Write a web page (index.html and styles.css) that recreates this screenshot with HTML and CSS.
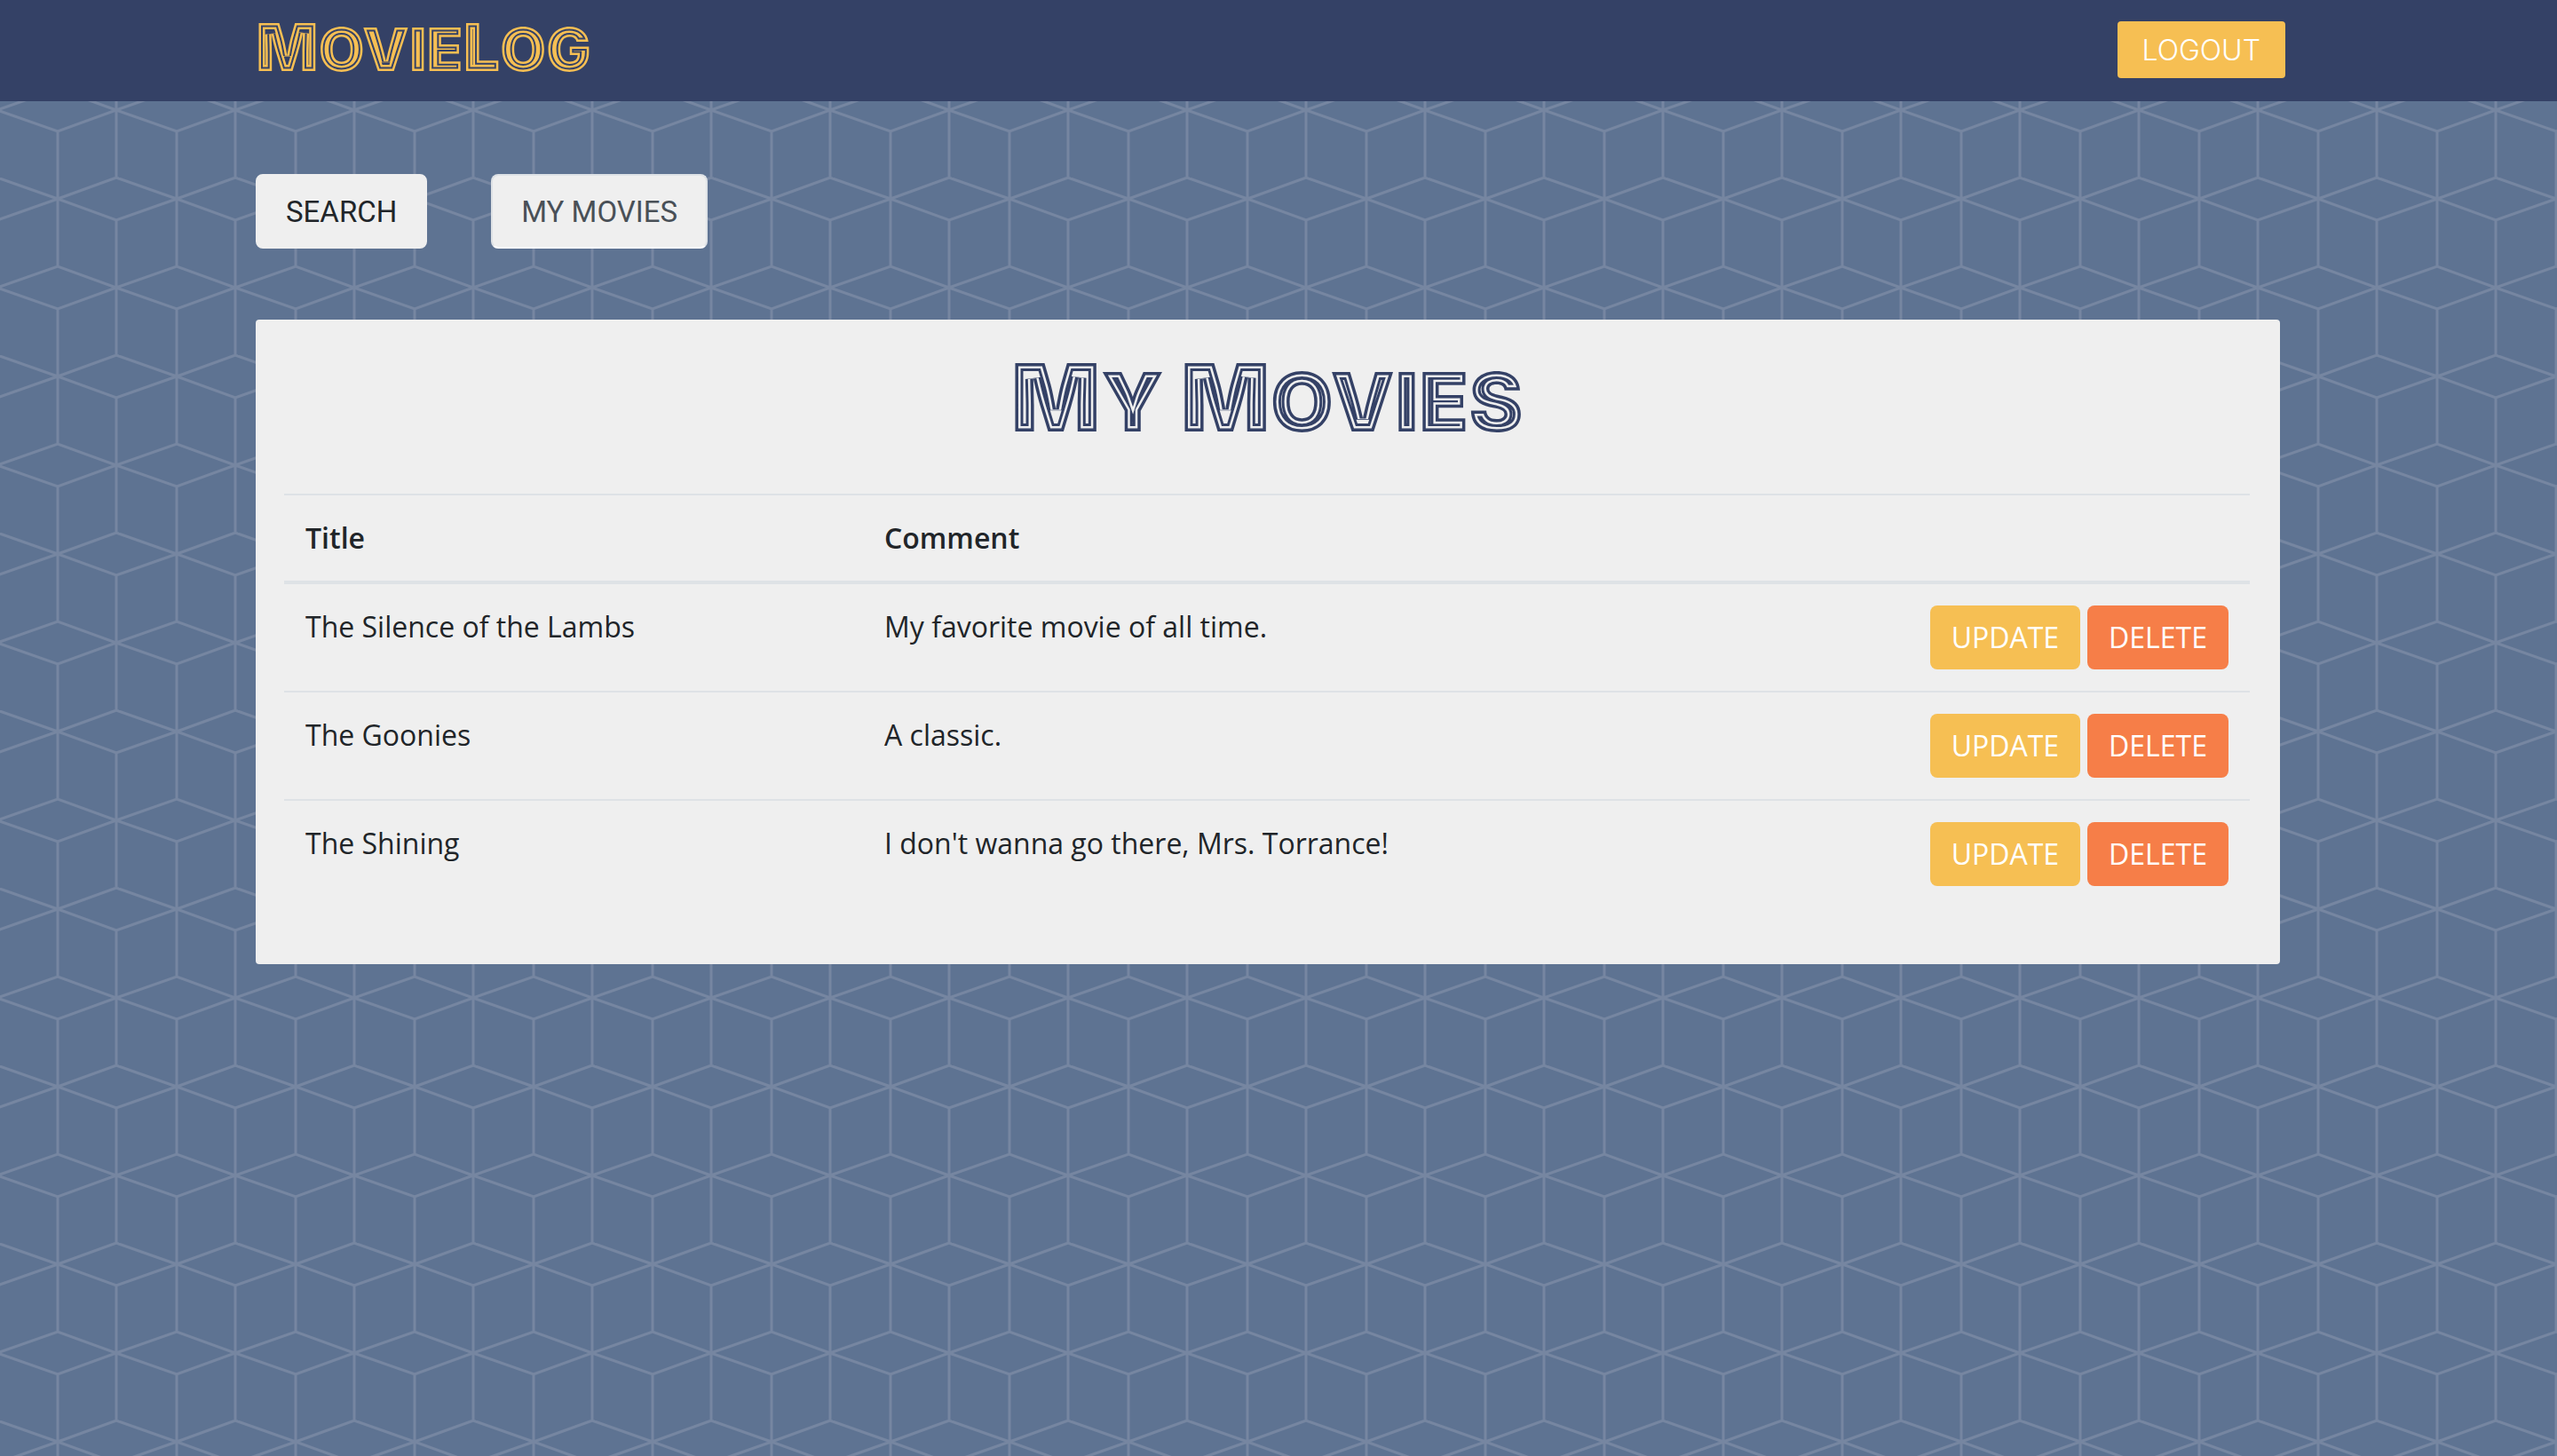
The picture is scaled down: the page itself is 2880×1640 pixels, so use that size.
FILE: index.html
```html
<!DOCTYPE html>
<html lang="en">
<head>
  <meta charset="utf-8">
  <meta name="viewport" content="width=device-width, initial-scale=1">
  <title>MovieLog</title>
  <link rel="stylesheet" href="styles.css">
</head>
<body>
  <header class="topbar">
    <a class="brand" href="#" aria-label="MovieLog">
      <svg class="neon neon-brand" width="400" height="64">
        <defs>
          <text id="brand-text" x="0" y="56"><tspan class="cap">M</tspan>ovie<tspan class="cap">L</tspan>og</text>
          <clipPath id="brand-clip"><use href="#brand-text"/></clipPath>
        </defs>
        <g clip-path="url(#brand-clip)">
          <use class="band-inner" href="#brand-text"/>
          <use class="band-gap" href="#brand-text"/>
          <use class="band-outer" href="#brand-text"/>
        </g>
      </svg>
    </a>
    <button class="logout" type="button">LOGOUT</button>
  </header>

  <main class="page">
    <nav class="tabs">
      <button class="tab" type="button">SEARCH</button>
      <button class="tab tab-active" type="button">MY MOVIES</button>
    </nav>

    <section class="panel">
      <h1 class="title">
        <svg class="neon neon-title" width="600" height="100" role="img" aria-label="My Movies">
          <defs>
            <text id="title-text" x="300" y="86" text-anchor="middle"><tspan class="cap">M</tspan>y <tspan class="cap">M</tspan>ovies</text>
            <clipPath id="title-clip"><use href="#title-text"/></clipPath>
          </defs>
          <g clip-path="url(#title-clip)">
            <use class="band-inner" href="#title-text"/>
            <use class="band-gap" href="#title-text"/>
            <use class="band-outer" href="#title-text"/>
          </g>
        </svg>
      </h1>

      <table class="movies">
        <thead>
          <tr>
            <th class="col-title" scope="col">Title</th>
            <th scope="col">Comment</th>
            <td></td>
          </tr>
        </thead>
        <tbody>
          <tr>
            <td>The Silence of the Lambs</td>
            <td>My favorite movie of all time.</td>
            <td><div class="actions"><button class="btn btn-update" type="button">UPDATE</button><button class="btn btn-delete" type="button">DELETE</button></div></td>
          </tr>
          <tr>
            <td>The Goonies</td>
            <td>A classic.</td>
            <td><div class="actions"><button class="btn btn-update" type="button">UPDATE</button><button class="btn btn-delete" type="button">DELETE</button></div></td>
          </tr>
          <tr>
            <td>The Shining</td>
            <td>I don't wanna go there, Mrs. Torrance!</td>
            <td><div class="actions"><button class="btn btn-update" type="button">UPDATE</button><button class="btn btn-delete" type="button">DELETE</button></div></td>
          </tr>
        </tbody>
      </table>
    </section>
  </main>
</body>
</html>
```
FILE: styles.css
```css
:root {
  --navy: #344166;
  --gold: #f6bf53;
  --coral: #f67e48;
  --paper: #efefef;
  --line: #dee2e6;
  --ink: #212529;
}

* {
  box-sizing: border-box;
}

body {
  margin: 0;
  min-height: 100vh;
  color: var(--ink);
  font: 32px/48px "Open Sans", "Noto Sans", sans-serif;
  background-color: #5e7392;
  background-image: url("data:image/svg+xml,%3Csvg xmlns='http://www.w3.org/2000/svg' width='134' height='200' viewBox='0 0 134 200'%3E%3Cpath d='M131 48V200M65 148V200M65 0V100M-3 124L65 100L131 124L65 148ZM131 124L199 100M131 124L199 148M65 24L131 0L199 24L131 48ZM65 24L-3 0M65 24L-3 48M65 224L131 200L199 224' fill='none' stroke='%237686a1' stroke-width='3'/%3E%3C/svg%3E");
}

button {
  margin: 0;
  font: inherit;
  cursor: pointer;
}

.topbar {
  display: flex;
  align-items: center;
  justify-content: space-between;
  height: 114px;
  padding: 0 306px 2px 10%;
  background: var(--navy);
}

.brand {
  display: flex;
}

/* Striped display lettering: nested strokes clipped to the letter shapes */
.neon {
  display: block;
  font-family: Inter, sans-serif;
  font-weight: 900;
  text-transform: uppercase;
}

.neon use {
  fill: none;
}

.neon-brand {
  font-size: 67px;
}

.neon-brand .cap {
  font-size: 74px;
}

.neon-brand .band-inner {
  stroke: var(--gold);
  stroke-width: 14px;
}

.neon-brand .band-gap {
  stroke: var(--navy);
  stroke-width: 9px;
}

.neon-brand .band-outer {
  stroke: var(--gold);
  stroke-width: 5px;
}

.neon-title {
  font-size: 92px;
}

.neon-title .cap {
  font-size: 106px;
}

.neon-title .band-inner {
  stroke: var(--navy);
  stroke-width: 18px;
}

.neon-title .band-gap {
  stroke: var(--paper);
  stroke-width: 12px;
}

.neon-title .band-outer {
  stroke: var(--navy);
  stroke-width: 7px;
}

.logout {
  height: 64px;
  padding: 2px 28px 0;
  border: 0;
  border-radius: 4px;
  color: #fff;
  background: var(--gold);
  font-family: Inter, sans-serif;
  font-weight: 300;
}

.page {
  padding: 82px 312px 80px 10%;
}

.tabs {
  display: flex;
  gap: 72px;
  margin-bottom: 80px;
}

.tab {
  height: 84px;
  padding: 2px 32px 0;
  border: 2px solid var(--paper);
  border-radius: 8px;
  color: var(--ink);
  background: var(--paper);
  font-family: Roboto, sans-serif;
  font-size: 33px;
}

.tab-active {
  border-color: #dee2e6 #dee2e6 #fff;
  color: #495057;
}

.panel {
  padding: 32px 34px 64px 32px;
  border-radius: 4px;
  background: var(--paper);
}

.title {
  display: flex;
  justify-content: center;
  margin: 8px 0 56px;
}

.movies {
  width: 100%;
  border-spacing: 0;
}

.movies th,
.movies td {
  padding: 24px;
  border-top: 2px solid var(--line);
  text-align: left;
  vertical-align: top;
}

.movies th {
  font-weight: 600;
}

.movies thead th,
.movies thead td {
  border-bottom: 4px solid var(--line);
}

.movies tbody tr:first-child td {
  border-top: 0;
}

.col-title {
  width: 652px;
}

.actions {
  display: flex;
  justify-content: flex-end;
  gap: 8px;
}

.btn {
  height: 72px;
  padding: 0 24px;
  border: 0;
  border-radius: 8px;
  color: #fff;
}

.btn-update {
  background: var(--gold);
}

.btn-delete {
  background: var(--coral);
}
```
